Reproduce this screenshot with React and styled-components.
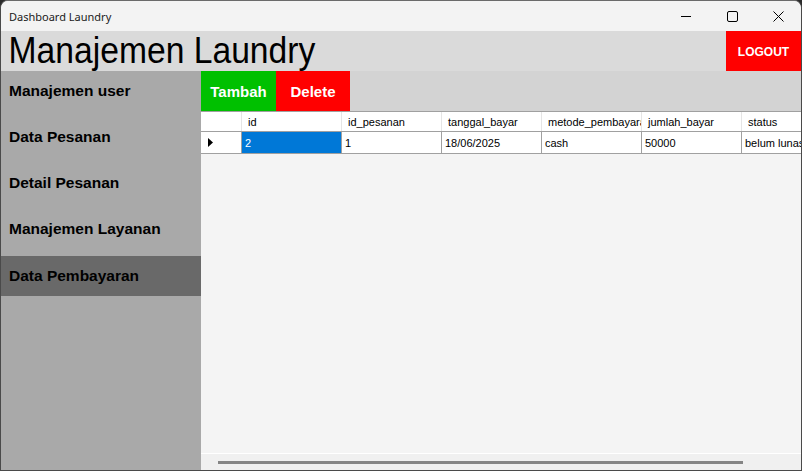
import React from 'react'
import styled, { createGlobalStyle } from 'styled-components'

const GlobalStyle = createGlobalStyle`
  html, body {
    margin: 0;
    padding: 0;
    background: #2b2b2b;
  }
  * { box-sizing: border-box; }
`

const menu = ['Manajemen user', 'Data Pesanan', 'Detail Pesanan', 'Manajemen Layanan', 'Data Pembayaran']

const columns = ['id', 'id_pesanan', 'tanggal_bayar', 'metode_pembayaran', 'jumlah_bayar', 'status']

const rows = [
  { id: '2', id_pesanan: '1', tanggal_bayar: '18/06/2025', metode_pembayaran: 'cash', jumlah_bayar: '50000', status: 'belum lunas' },
]

function App() {
  return (
    <>
      <GlobalStyle />
      <Window>
        <TitleBar>
          <TitleText>Dashboard Laundry</TitleText>
          <Controls>
            <CtrlButton>
              <svg width="10" height="10" viewBox="0 0 10 10">
                <line x1="0" y1="5.5" x2="10" y2="5.5" stroke="#000" strokeWidth="1" />
              </svg>
            </CtrlButton>
            <CtrlButton>
              <svg width="11" height="11" viewBox="0 0 11 11">
                <rect x="0.5" y="0.5" width="10" height="10" rx="1.5" fill="none" stroke="#000" strokeWidth="1" />
              </svg>
            </CtrlButton>
            <CtrlButton>
              <svg width="11" height="11" viewBox="0 0 11 11">
                <path d="M0.5 0.5 L10.5 10.5 M10.5 0.5 L0.5 10.5" stroke="#000" strokeWidth="1" />
              </svg>
            </CtrlButton>
          </Controls>
        </TitleBar>

        <Header>
          <AppTitle>Manajemen Laundry</AppTitle>
          <LogoutButton>LOGOUT</LogoutButton>
        </Header>

        <Body>
          <Sidebar>
            {menu.map((m, i) => (
              <MenuItem key={m} active={i === 4}>{m}</MenuItem>
            ))}
          </Sidebar>

          <Main>
            <Toolbar>
              <ActionButton color="#00c000" w={75}>Tambah</ActionButton>
              <ActionButton color="#ff0000" w={74}>Delete</ActionButton>
            </Toolbar>

            <GridArea>
              <Table>
                <HeadRow>
                  <RowHeadCell head />
                  {columns.map(c => (
                    <HeadCell key={c}>{c}</HeadCell>
                  ))}
                </HeadRow>
                {rows.map((r, ri) => (
                  <DataRow key={ri}>
                    <RowHeadCell>
                      <svg width="5" height="9" viewBox="0 0 5 9">
                        <polygon points="0,0 5,4.5 0,9" fill="#000" />
                      </svg>
                    </RowHeadCell>
                    {columns.map((c, ci) => (
                      <DataCell key={c} selected={ci === 0}>{r[c]}</DataCell>
                    ))}
                  </DataRow>
                ))}
              </Table>
              <HScroll>
                <Thumb />
              </HScroll>
            </GridArea>
          </Main>
        </Body>
      </Window>
    </>
  )
}

export default App

const Window = styled.div`
  width: 802px;
  height: 471px;
  display: flex;
  flex-direction: column;
  overflow: hidden;
  border: 1px solid #4a4a4a;
  border-top-color: #6a6a6a;
  border-radius: 8px 8px 0 0;
  background: #f3f3f3;
`

const TitleBar = styled.div`
  height: 30px;
  flex-shrink: 0;
  display: flex;
  align-items: center;
  background: #f3f3f3;
`

const TitleText = styled.div`
  flex: 1;
  padding-left: 8px;
  font-family: 'Noto Sans', 'Liberation Sans', sans-serif;
  font-size: 11px;
  color: #1a1a1a;
`

const Controls = styled.div`
  display: flex;
  height: 100%;
`

const CtrlButton = styled.div`
  width: 46px;
  height: 100%;
  display: flex;
  align-items: center;
  justify-content: center;
`

const Header = styled.div`
  height: 40px;
  flex-shrink: 0;
  display: flex;
  align-items: stretch;
  justify-content: space-between;
  background: #dadada;
`

const AppTitle = styled.div`
  padding-left: 8px;
  font-family: 'Liberation Sans', Arial, sans-serif;
  font-size: 36px;
  line-height: 40px;
  color: #000;
  transform: scaleX(0.935);
  transform-origin: left center;
  white-space: nowrap;
`

const LogoutButton = styled.div`
  width: 75px;
  background: #ff0000;
  color: #fff;
  font-family: 'Liberation Sans', Arial, sans-serif;
  font-weight: bold;
  font-size: 12px;
  display: flex;
  align-items: center;
  justify-content: center;
  padding-top: 1px;
`

const Body = styled.div`
  flex: 1;
  display: flex;
  min-height: 0;
`

const Sidebar = styled.div`
  width: 200px;
  flex-shrink: 0;
  background: #a9a9a9;
  display: flex;
  flex-direction: column;
  gap: 6px;
`

const MenuItem = styled.div`
  height: 40px;
  display: flex;
  align-items: center;
  padding-left: 8px;
  margin-top: ${p => (p.active ? '1px' : '0')};
  background: ${p => (p.active ? '#696969' : 'transparent')};
  font-family: 'Liberation Sans', Arial, sans-serif;
  font-weight: bold;
  font-size: 15.5px;
  color: #000;
`

const Main = styled.div`
  flex: 1;
  display: flex;
  flex-direction: column;
  min-width: 0;
`

const Toolbar = styled.div`
  height: 41px;
  flex-shrink: 0;
  display: flex;
  background: #d3d3d3;
  border-bottom: 1px solid #a0a0a0;
`

const ActionButton = styled.div`
  width: ${p => p.w}px;
  background: ${p => p.color};
  color: #fff;
  font-family: 'Liberation Sans', Arial, sans-serif;
  font-weight: bold;
  font-size: 15px;
  display: flex;
  align-items: center;
  justify-content: center;
  padding-top: 1px;
`

const GridArea = styled.div`
  flex: 1;
  display: flex;
  flex-direction: column;
  justify-content: space-between;
  background: #f4f4f4;
  overflow: hidden;
`

const Table = styled.div`
  display: flex;
  flex-direction: column;
  font-family: 'Liberation Sans', Arial, sans-serif;
  font-size: 11px;
  color: #000;
`

const HeadRow = styled.div`
  display: flex;
  height: 20px;
  background: #fff;
  border-bottom: 1px solid #a0a0a0;
`

const DataRow = styled.div`
  display: flex;
  height: 22px;
  background: #fff;
  border-bottom: 1px solid #a0a0a0;
`

const RowHeadCell = styled.div`
  width: 41px;
  flex-shrink: 0;
  display: flex;
  align-items: center;
  padding-left: 7px;
  border-right: 1px solid ${p => (p.head ? '#e5e5e5' : '#a0a0a0')};
`

const HeadCell = styled.div`
  width: 100px;
  flex-shrink: 0;
  display: flex;
  align-items: center;
  padding-left: 6px;
  border-right: 1px solid #e5e5e5;
  white-space: nowrap;
  overflow: hidden;
`

const DataCell = styled.div`
  width: 100px;
  flex-shrink: 0;
  display: flex;
  align-items: center;
  padding-left: 3px;
  border-right: 1px solid #a0a0a0;
  white-space: nowrap;
  overflow: hidden;
  background: ${p => (p.selected ? '#0078d7' : '#fff')};
  color: ${p => (p.selected ? '#fff' : '#000')};
`

const HScroll = styled.div`
  height: 17px;
  flex-shrink: 0;
  background: #f0f0f0;
  border-top: 1px solid #fff;
  display: flex;
  align-items: center;
  padding-left: 17px;
`

const Thumb = styled.div`
  width: 525px;
  height: 3px;
  background: #858585;
`
